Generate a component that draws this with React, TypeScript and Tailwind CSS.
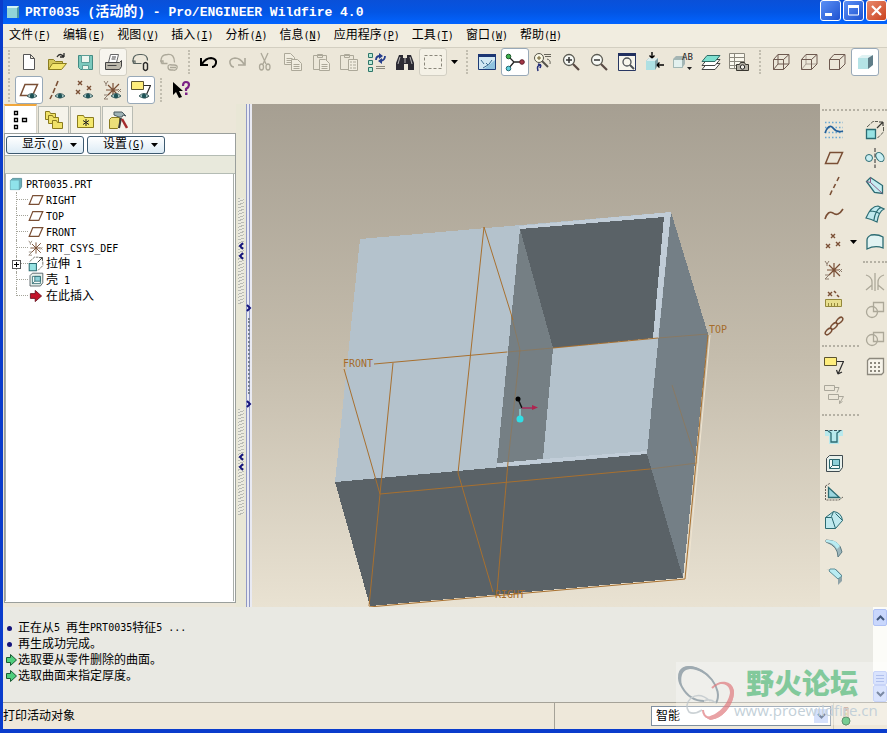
import { useState, type ReactNode } from "react";
import clsx from "clsx";

const INK = "#2b2b2b";
const BROWN = "#7a4f35";
const TEAL = "#2b6b72";
const GRAY = "#aca899";

interface Tool {
  name: string;
  icon: ReactNode;
  active?: boolean;
  raised?: boolean;
  caret?: boolean;
}

function Glyph({ children, size = 20 }: { children: ReactNode; size?: number }) {
  return (
    <svg width={size} height={size} viewBox="0 0 20 20" fill="none" strokeWidth="1" className="shrink-0" aria-hidden="true">
      {children}
    </svg>
  );
}

function Caret() {
  return (
    <svg width="7" height="4" viewBox="0 0 7 4" className="shrink-0" aria-hidden="true">
      <path d="M0 0h7L3.500 4z" fill="#000" />
    </svg>
  );
}

function Mono({ children }: { children: ReactNode }) {
  return <span className="font-['DejaVu_Sans_Mono',monospace] text-[10px]">{children}</span>;
}

// small eye in the corner of the datum display buttons
const eye = (
  <>
    <path d="M8 16q5-5 10 0q-5 4-10 0z" fill="#a9c9c9" stroke="#3f5f60" />
    <circle cx="13" cy="16" r="2.2" fill="#1f5357" />
  </>
);

const cross = (x: number, y: number, c = BROWN) => (
  <path d={`M${x - 2} ${y - 2}l4 4m0-4l-4 4`} stroke={c} strokeWidth="1.4" />
);

const csys = (
  <>
    <path d="M10 3v14M5 5l11 11M16 4L5 15M3 10h12" stroke={BROWN} strokeWidth="1.2" />
    <path d="M1 1l2 3 2-3M3 4v2M15 9l3 3m0-3l-3 3M1 15h4l-4 4h4" stroke="#8c7b6c" />
  </>
);

const plane = <path d="M6 4.500h12.500l-5 11H1.500z" stroke={BROWN} strokeWidth="1.500" />;
const note = (
  <>
    <path d="M0.500 1.500h12v8h-12z" fill="#ffee7c" stroke="#5c5430" />
    <path d="M13 5.500h6.500L14 18m0 0l-1.500-4m1.500 4l4-2" stroke={INK} strokeWidth="1.200" />
  </>
);

const page = (x: number, y: number, c: string) => (
  <>
    <path d={`M${x + 0.5} ${y + 0.5}h6l4 4v7h-10z`} stroke={c} fill="#f1ede0" />
    <path d={`M${x + 2.5} ${y + 5.5}h6m-6 2h6m-6 2h6`} stroke={c} />
  </>
);

const cube = (
  <>
    <path d="M2.500 7.500h10v10h-10z" />
    <path d="M2.500 7.500l4.500-5h11l-5.500 5M18 2.500v9.500l-5.500 5.500" />
  </>
);

const lens = (
  <>
    <circle cx="8" cy="8" r="5.500" fill="#f7f9f5" stroke="#5a5a52" strokeWidth="1.300" />
    <path d="M12 12l6 6" stroke="#5a4b45" strokeWidth="2.200" />
  </>
);

const fileTools: Tool[] = [
  { name: "新建", icon: <path d="M4.500 2.500h7l4 4v11h-11zM11.500 2.500v4h4" fill="#fff" stroke="#555" /> },
  {
    name: "打开",
    icon: (
      <>
        <path d="M1.500 17.500v-10h5l2 2h7v3" fill="#d5c75a" stroke="#8b7d20" />
        <path d="M1.500 17.500l4-6h14l-5 6z" fill="#f3e56c" stroke="#8b7d20" />
        <path d="M10 5q3-5 7 0m0 0v-4m0 4h-4" stroke={INK} strokeWidth="1.300" />
      </>
    ),
  },
  {
    name: "保存",
    icon: (
      <>
        <path d="M3.500 3.500h14v14h-12l-2-2z" fill="#7cc9bd" stroke="#438b83" />
        <path d="M6.500 3.500h8v7h-8zM7.500 13.500h6v4h-6z" fill="#eef6ef" stroke="#5c9e96" />
      </>
    ),
  },
  {
    name: "打印",
    raised: true,
    icon: (
      <>
        <path d="M7.500 2.500h8l-2 8h-8z" fill="#fff" stroke="#666" />
        <path d="M2.500 10.500h14l2-2v6l-2 3h-14z" fill="#bdb9ad" stroke="#444" />
        <path d="M4.500 13.500h9M9 5h4M8.500 7h4" stroke="#444" />
      </>
    ),
  },
  {
    name: "发送邮件",
    icon: (
      <>
        <path d="M2.500 11.500q-2-9 6-9h2q6 0 6 6M2.500 11.500h8M1 9h3v3" stroke="#55605c" strokeWidth="1.200" />
        <path d="M12.500 17v-5q2-3 4 0v5q-2 3-4 0v-3" stroke={INK} strokeWidth="1.400" />
      </>
    ),
  },
  {
    name: "发送链接",
    icon: (
      <path d="M2.500 11.500q-2-9 6-9q7-1 7 8M2.500 11.500h6M1 9h3v3M9 15q0-3 4-2h2q4 0 3 3t-4 2h-2q-3 0-3-3zM11 15.500h6" stroke={GRAY} strokeWidth="1.300" />
    ),
  },
];

const editTools: Tool[] = [
  { name: "撤消", icon: <path d="M2 6v7h7M3 12q4-6 9-6q6 1 5 5q-1 4-4 4" stroke="#000" strokeWidth="2" /> },
  { name: "重做", icon: <path d="M18 6v7h-7M17 12q-4-6-9-6q-6 1-5 5q1 4 4 4" stroke={GRAY} strokeWidth="1.600" /> },
  {
    name: "剪切",
    icon: (
      <g stroke={GRAY} strokeWidth="1.300">
        <path d="M6 1l5 11M13 1L8 12" />
        <ellipse cx="6.500" cy="15" rx="2" ry="3" />
        <ellipse cx="13" cy="15" rx="2" ry="3" />
      </g>
    ),
  },
  { name: "复制", icon: <>{page(1, 1, GRAY)}{page(8, 7, GRAY)}</> },
  {
    name: "粘贴",
    icon: (
      <>
        <path d="M2.500 3.500h13v14h-13zM6.500 5.500v-3h5v3z" stroke={GRAY} />
        {page(8, 7, GRAY)}
      </>
    ),
  },
  {
    name: "选择性粘贴",
    icon: (
      <>
        <path d="M1.500 3.500h13v14h-13zM5.500 5.500v-3h5v3z" stroke={GRAY} />
        <path d="M9.500 7.500h9v11h-9z" fill="#f1ede0" stroke={GRAY} />
        <path d="M11 10h2m1 0h3m-6 3h2m1 0h3m-6 3h2m1 0h3" stroke={GRAY} />
      </>
    ),
  },
  {
    name: "再生",
    icon: (
      <>
        <path d="M1.500 1.500h4v4h-4zM1.500 8.500h4v4h-4zM1.500 15.500h4v4h-4z" fill="#b9ead8" stroke="#2e766a" />
        <path d="M9 8q0-4 4-4M18 4q0 4-4 5" stroke="#273f8c" strokeWidth="1.800" />
        <path d="M12 1l4 3-4 3zM15 6l-4 3 4 3z" fill="#273f8c" />
        <path d="M9 14.500h9m-9 2h9" stroke="#8c897c" />
      </>
    ),
  },
  {
    name: "查找",
    icon: (
      <>
        <path d="M4 3h4v3h4V3h4l3 8v7h-6v-6h-4v6H1v-7z" fill="#2c2b33" />
        <path d="M5 5L3 12M15 5l2 7M10 6v5" stroke="#b7b5b5" />
      </>
    ),
  },
];

const viewTools: Tool[] = [
  {
    name: "重画",
    icon: (
      <>
        <path d="M1.500 2.500h17v15h-17z" fill="#d3e9f3" stroke="#1e3c77" />
        <path d="M1 2h18v3H1z" fill="#1c3673" />
        <path d="M7 17L18 8v9z" fill="#8fc3df" />
        <path d="M4 8l3 4M15 8q-2 5-9 8M9 11l2 2" stroke="#3a6d92" />
      </>
    ),
  },
  {
    name: "旋转中心",
    active: true,
    icon: (
      <>
        <path d="M4 5l5 5-5 6M9 10h8" stroke="#222" strokeWidth="1.300" />
        <circle cx="3.500" cy="4.500" r="2.300" fill="#3daf4a" stroke="#1c592a" />
        <circle cx="3.500" cy="16.500" r="2.300" fill="#60cedc" stroke="#226872" />
        <circle cx="17" cy="10" r="2.300" fill="#a43747" stroke="#611c29" />
      </>
    ),
  },
  {
    name: "定向模式",
    icon: (
      <>
        <circle cx="6" cy="6" r="4.500" fill="#faf8e5" stroke="#55544b" />
        <path d="M6 4v4M4 6h4" stroke="#6b5d2c" />
        <path d="M9 9l6 6" stroke="#57534b" strokeWidth="2" />
        <path d="M11 2.500h7m-6 2h6M14 7q4 1 3 5" stroke="#66645a" />
        <path d="M5 19q-2-6 3-6m0 0l-3-1m3 1l-1 3" stroke="#26307c" strokeWidth="1.600" />
      </>
    ),
  },
  { name: "放大", icon: <>{lens}<path d="M8 5v6M5 8h6" stroke="#333" strokeWidth="1.500" /></> },
  { name: "缩小", icon: <>{lens}<path d="M5 8h6" stroke="#333" strokeWidth="1.500" /></> },
  {
    name: "重新调整",
    icon: (
      <>
        <path d="M1.500 1.500h17v17h-17z" fill="#f8f6ec" stroke="#283763" />
        <path d="M1 1h18v3H1z" fill="#22305f" />
        <circle cx="10" cy="10" r="4" stroke="#4e5256" strokeWidth="1.300" />
        <path d="M13 13l4 4" stroke="#4e5256" strokeWidth="2" />
      </>
    ),
  },
  {
    name: "重定向",
    icon: (
      <>
        <path d="M1 9l3-3h9v7l-3 5H1z" fill="#7f9da3" />
        <path d="M1 9h9v9H1z" fill="#aee0e3" />
        <path d="M1 9l3-3h9l-3 3z" fill="#dceeee" />
        <path d="M7 0v6m0 0L4.500 3.500M7 6l2.500-2.500M19 13h-7m0 0l2.500-2.500M12 13l2.500 2.500" stroke="#000" strokeWidth="1.400" />
      </>
    ),
  },
  {
    name: "保存的视图",
    icon: (
      <>
        <path d="M0 7l3-3h9v8l-3 4H0z" fill="#a5b5b4" />
        <path d="M0.500 7.500h9v8h-9z" fill="#e3f1ef" stroke="#a3b8b5" />
        <text x="9" y="8" fontSize="9" fontFamily="DejaVu Sans Mono, monospace" fill="#222">AB</text>
        <path d="M14 15h5l-2.500 3z" fill="#222" />
      </>
    ),
  },
  {
    name: "图层",
    icon: (
      <>
        <path d="M6 11.500h13l-5 6H1z" fill="#fff" stroke="#444" />
        <path d="M6 7.500h13l-5 6H1z" fill="#fff" stroke="#444" />
        <path d="M6 3.500h13l-5 6H1z" fill="#7fe0d0" stroke="#2f6d67" />
      </>
    ),
  },
  {
    name: "视图管理器",
    icon: (
      <>
        <path d="M0.500 1.500h15v15h-15zM5.500 1.500v15M0.500 5.500h15m-15 4h15m-15 4h15" fill="#faf8ee" stroke="#8b887d" />
        <path d="M7.500 12.500h3l1-2h4l1 2h3v6h-12z" fill="#b5b1a6" stroke="#38362f" />
        <circle cx="13.500" cy="15" r="2.200" fill="#f4f2ea" stroke="#222" />
      </>
    ),
  },
];

const shadeTools: Tool[] = [
  {
    name: "线框",
    icon: <g stroke="#6e5a50">{cube}<path d="M7 2.500v9.500h11M7 12l-4.500 5.500" /></g>,
  },
  {
    name: "隐藏线",
    icon: <g stroke="#6e5a50"><path d="M7 2.500v9.500h11M7 12l-4.500 5.500" stroke="#a89d92" />{cube}</g>,
  },
  { name: "无隐藏线", icon: <g stroke="#6e5a50">{cube}</g> },
  {
    name: "着色",
    active: true,
    icon: (
      <>
        <path d="M3 6h10v11H3z" fill="#b5e3e6" />
        <path d="M3 6l4-3h11l-5 3z" fill="#dff2f3" />
        <path d="M13 6l5-3v10l-5 4z" fill="#5f7d88" />
      </>
    ),
  },
];

const datumTools: Tool[] = [
  { name: "平面显示", active: true, icon: <>{plane}{eye}</> },
  { name: "轴显示", icon: <><path d="M11 1l-2 5M8 8l-2 5M5 15l-2 4" stroke={BROWN} strokeWidth="1.600" />{eye}</> },
  { name: "点显示", icon: <>{cross(5, 3)}{cross(3, 12)}{cross(14, 8)}{eye}</> },
  { name: "坐标系显示", icon: <>{csys}{eye}</> },
  { name: "注释显示", active: true, icon: <>{note}{eye}</> },
];

const helpTool: Tool = {
  name: "上下文帮助",
  icon: (
    <>
      <path d="M2 2v13l3-3 3 6 3-1-3-6h4z" fill="#000" />
      <path d="M12 6q0-4 3-4t3 3q0 2-3 4v2" stroke="#7b2085" strokeWidth="2.200" />
      <path d="M14 12.500h2.500V15H14z" fill="#7b2085" />
    </>
  ),
};

const sketchTools: Tool[] = [
  {
    name: "草绘",
    icon: (
      <>
        <path d="M1 2.500h18M1 7.500h18M1 12.500h18M1 17.500h18" stroke="#6aa9d4" strokeWidth="1.500" strokeDasharray="1.500 2" />
        <path d="M1 13q4-10 8-5t10 3" stroke="#235f99" strokeWidth="1.600" />
      </>
    ),
  },
  { name: "平面", icon: plane },
  { name: "轴", icon: <path d="M15 1l-2 4M11.500 8l-2 4M8 14.500L6 19" stroke={BROWN} strokeWidth="1.600" /> },
  { name: "曲线", icon: <path d="M1 15q3-9 8-6q5 4 10-4" stroke={BROWN} strokeWidth="1.600" /> },
  { name: "点", caret: true, icon: <>{cross(9, 4)}{cross(4, 14)}{cross(14, 12)}</> },
  { name: "坐标系", icon: csys },
  {
    name: "偏移坐标系",
    icon: (
      <>
        <path d="M1.500 11.500h16v7h-16z" fill="#e8df8d" stroke="#94883c" />
        <path d="M4.500 15v3m3-3v3m3-3v3m3-3v3" stroke="#94883c" />
        {cross(6, 6)}
        <path d="M10 3l2 2M13 7l2 2" stroke={BROWN} strokeWidth="1.600" />
      </>
    ),
  },
  {
    name: "参照",
    icon: (
      <g stroke={BROWN} strokeWidth="1.500">
        <ellipse cx="4.500" cy="15.500" rx="4" ry="2.200" transform="rotate(-45 4.500 15.500)" />
        <ellipse cx="10" cy="10" rx="4" ry="2.200" transform="rotate(-45 10 10)" />
        <ellipse cx="15.500" cy="4.500" rx="4" ry="2.200" transform="rotate(-45 15.500 4.500)" />
      </g>
    ),
  },
];

const noteTools: Tool[] = [
  { name: "注释", icon: note },
  {
    name: "传播注释",
    icon: (
      <path d="M0.500 1.500h10v5h-10zM4.500 10.500h10v5h-10zM11 3.500h4l-2 5M15 12.500h4.500l-4 7m0 0v-3m0 3l3-2" stroke="#aaa79b" />
    ),
  },
];

const shellIcon = (
  <>
    <path d="M2.500 4.500l3-3h13v12l-3 4h-13z" stroke="#3f4b50" fill="#e9f1ec" />
    <path d="M5.500 5.500h10v9h-10z" fill="#f4faf7" stroke="#2a666d" />
    <path d="M8.500 5.500h7v6h-7z" fill="#8ed0d8" stroke="#2a666d" />
    <path d="M8.500 11.500l-3 3" stroke="#2a666d" />
  </>
);

const featureTools: Tool[] = [
  {
    name: "孔",
    icon: (
      <>
        <path d="M1 4h18v6h-4v8H5v-8H1z" fill="#b8e9ed" />
        <path d="M1 4.500h18" stroke="#3a4f58" strokeDasharray="3 1.500" />
        <path d="M4 5l3 2v9h6V7l3-2" stroke={TEAL} strokeWidth="1.300" />
      </>
    ),
  },
  { name: "壳", icon: shellIcon },
  {
    name: "筋",
    icon: (
      <>
        <path d="M4.500 5.500v10h11z" fill="#9bd6df" stroke={TEAL} strokeWidth="1.300" />
        <path d="M1.500 4v14H15M1.500 4l5-3M15 18l4-3" stroke="#66615a" strokeDasharray="2 1" />
      </>
    ),
  },
  {
    name: "拔模",
    icon: (
      <>
        <path d="M1.500 7.500l8-6q8 1 9 9l-7 8h-10z" fill="#bfe9ee" stroke={TEAL} />
        <path d="M9.500 1.500l-2 5 4 12M1.500 7.500h6M18.500 10.500l-7-7" stroke={TEAL} />
      </>
    ),
  },
  {
    name: "倒圆角",
    icon: (
      <>
        <path d="M2 2q14 0 16 12l-4 5Q14 8 2 4z" fill="#9cb7bd" stroke="#5f7d84" />
        <path d="M2 2q10-1 14 6l-3 3Q9 4 2 4z" fill="#b9ecf2" />
      </>
    ),
  },
  {
    name: "倒角",
    icon: (
      <>
        <path d="M2 4h3l9 9v6l4-4V9l-6-6z" fill="#8fa3a8" />
        <path d="M6 3h5l7 7-4 3-9-8z" fill="#b9ecf2" stroke="#5f8f98" />
      </>
    ),
  },
];

const extrudeIcon = (
  <>
    <path d="M1.500 9.500h9v9h-9z" fill="#97e3e3" stroke={TEAL} strokeWidth="1.300" />
    <path d="M2 7l6-5.500h5M18.500 7v5l-6 6" stroke="#5a5a50" strokeDasharray="4 1" />
    <path d="M12 8l6-6m0 0h-4m4 0v4" stroke="#3a3a34" strokeWidth="1.200" />
  </>
);

const shapeTools: Tool[] = [
  { name: "拉伸", icon: extrudeIcon },
  {
    name: "旋转",
    icon: (
      <>
        <circle cx="4" cy="10" r="3.500" fill="#c9eef2" stroke={TEAL} />
        <ellipse cx="15" cy="9" rx="3.500" ry="5" fill="#c9eef2" stroke={TEAL} transform="rotate(-35 15 9)" />
        <path d="M10 0v20" stroke={INK} strokeDasharray="4 1.500" />
      </>
    ),
  },
  {
    name: "可变截面扫描",
    icon: (
      <>
        <path d="M1.500 5.500l4-4 12 8v8l-8-1z" fill="#c5edf1" stroke={TEAL} strokeWidth="1.300" />
        <path d="M5.500 1.500v5l12 11M1.500 5.500l4 1" stroke="#8c5f83" />
      </>
    ),
  },
  {
    name: "边界混合",
    icon: <path d="M1 14q5-12 12-12l6 3q-5 2-7 13-6-3-11-4zM5 7q6 0 10 3M9 16q1-9 7-13" fill="#bfe9ee" stroke={TEAL} strokeWidth="1.200" />,
  },
  { name: "造型", icon: <path d="M2 8q0-3 4-5 7-1 12 2v11q-8-3-16 1z" fill="#e1f3f2" stroke={TEAL} strokeWidth="1.300" /> },
];

const modifyTools: Tool[] = [
  { name: "镜像", icon: <path d="M10 1v18M1 3q6 2 6 7v8M1 18l6-5M19 3q-6 2-6 7v8M19 18l-6-5" stroke={GRAY} strokeWidth="1.300" /> },
  { name: "合并", icon: <><circle cx="7" cy="12" r="5.500" stroke={GRAY} strokeWidth="1.300" /><path d="M8.500 2.500h10v9h-10z" stroke={GRAY} strokeWidth="1.300" /></> },
  { name: "修剪", icon: <><circle cx="7" cy="12" r="5.500" stroke={GRAY} strokeWidth="1.300" /><path d="M8.500 4.500h10v9h-10z" stroke={GRAY} strokeWidth="1.300" /></> },
  {
    name: "阵列",
    icon: (
      <>
        <path d="M2.500 4.500l2-2h14v14l-2 2h-14z" fill="#f6f3e9" stroke="#8c887d" strokeWidth="1.300" />
        <path d="M5 7h10M5 11h10M5 15h10" stroke="#8c887d" strokeWidth="2" strokeDasharray="2 2" />
      </>
    ),
  },
];

const menus = [
  ["文件", "F"], ["编辑", "E"], ["视图", "V"], ["插入", "I"], ["分析", "A"],
  ["信息", "N"], ["应用程序", "P"], ["工具", "T"], ["窗口", "W"], ["帮助", "H"],
];

const arrow = (
  <path d="M3 7h6V3l8 7-8 7v-4H3z" fill="#c3142a" stroke="#5f0914" />
);

const treeItems: { icon: ReactNode; label: ReactNode; expandable?: boolean }[] = [
  { icon: plane, label: <Mono>RIGHT</Mono> },
  { icon: plane, label: <Mono>TOP</Mono> },
  { icon: plane, label: <Mono>FRONT</Mono> },
  { icon: csys, label: <Mono>PRT_CSYS_DEF</Mono> },
  { icon: extrudeIcon, label: <>拉伸<Mono> 1</Mono></>, expandable: true },
  { icon: shellIcon, label: <>壳<Mono> 1</Mono></> },
  { icon: arrow, label: "在此插入" },
];

const folder = (x: number, y: number) => (
  <path d={`M${x} ${y + 8}v-8h4l1 2h5v6z`} fill="#f0e268" stroke="#8a7b1e" />
);

const tabs: { name: string; icon: ReactNode }[] = [
  {
    name: "模型树",
    icon: <path d="M3.500 1.500h3v3h-3zM3.500 8.500h3v3h-3zM3.500 15.500h3v3h-3zM11.500 8.500h4v3h-4z" stroke="#000" strokeWidth="1.300" />,
  },
  { name: "文件夹浏览器", icon: <>{folder(1.5, 1.5)}{folder(4.5, 5.5)}{folder(8.5, 10.5)}</> },
  {
    name: "收藏夹",
    icon: (
      <>
        <path d="M1.500 17.500v-12h6l1 2h9v10z" fill="#f4e86c" stroke="#8a7b1e" />
        <path d="M10 9v7M7 10.500l6 4M13 10.500l-6 4" stroke="#222" />
      </>
    ),
  },
  {
    name: "连接",
    icon: (
      <>
        <path d="M1.500 18.500v-9l2-2h8v9l-2 2z" fill="#ecdf79" stroke="#8a7b1e" />
        <path d="M6 2h8l4 4-3-1-1 2h-3L6 5z" fill="#9fb3b5" stroke="#4b5b60" />
        <path d="M13 8l-2 10" stroke="#3b3b3b" strokeWidth="2" />
        <path d="M14 9l5 9" stroke="#a32b2b" strokeWidth="2.500" />
      </>
    ),
  },
];

function ToolButton({ tool }: { tool: Tool }) {
  return (
    <button
      type="button"
      aria-label={tool.name}
      title={tool.name}
      className={clsx(
        "flex size-7 shrink-0 items-center justify-center rounded-[3px] border",
        tool.active && "border-[#98a9b8] bg-white",
        tool.raised && "border-[#d2cfc3] bg-[#f7f5ee]",
        !tool.active && !tool.raised && "border-transparent hover:bg-white/60"
      )}
    >
      <Glyph>{tool.icon}</Glyph>
    </button>
  );
}

function Grip({ wide }: { wide?: boolean }) {
  return (
    <div className={clsx("flex h-7 shrink-0 justify-center py-0.5", wide ? "w-3.5" : "w-3")}>
      <span className="border-l-2 border-dotted border-[#c2beb0]" />
    </div>
  );
}

function ToolRow({ tools }: { tools: Tool[] }) {
  return (
    <div className="flex">
      {tools.map((t) => (
        <ToolButton key={t.name} tool={t} />
      ))}
    </div>
  );
}

function ToolColumn({ groups }: { groups: Tool[][] }) {
  return (
    <>
      {groups.map((tools, i) => (
        <div key={i}>
          <div className={clsx("flex flex-col justify-center px-0.5", i < 2 ? "h-3" : "h-3.5")}>
            <span className="border-t-2 border-dotted border-[#b5b1a4]" />
          </div>
          {tools.map((t) => (
            <div key={t.name} className="flex items-center gap-0.5">
              <ToolButton tool={t} />
              {t.caret && <Caret />}
            </div>
          ))}
        </div>
      ))}
    </>
  );
}

function TitleBar() {
  return (
    <header className="flex h-6 shrink-0 items-center bg-linear-to-b from-[#0a50d8] via-[#0355e4] to-[#0264ff] text-white">
      <span className="ml-1 size-3 border-t-2 border-r-2 border-t-[#d2f3f3] border-r-[#4b98a2] bg-[#8fd4d8]" />
      <h1 className="ml-1.5 flex-1 font-['Liberation_Mono','Noto_Sans_CJK_SC',monospace] text-[13px] leading-5 font-bold whitespace-pre">
        PRT0035 (<span className="text-sm leading-5">活动的</span>) - Pro/ENGINEER Wildfire 4.0
      </h1>
      <div className="flex gap-0.5 self-start">
        <button type="button" aria-label="最小化" className="size-[21px] rounded-[3px] border border-white bg-linear-to-br from-[#5b8ff5] to-[#1f52d0]">
          <svg viewBox="0 0 19 19" aria-hidden="true"><path d="M4 12h7v3H4z" fill="#fff" /></svg>
        </button>
        <button type="button" aria-label="最大化" className="size-[21px] rounded-[3px] border border-white bg-linear-to-br from-[#5b8ff5] to-[#1f52d0]">
          <svg viewBox="0 0 19 19" fill="none" aria-hidden="true"><path d="M4.500 5h10v9h-10z" stroke="#fff" /><path d="M4 4h11v3H4z" fill="#fff" /></svg>
        </button>
        <button type="button" aria-label="关闭" className="size-[21px] rounded-[3px] border border-white bg-linear-to-br from-[#e8896c] to-[#c9401a]">
          <svg viewBox="0 0 19 19" aria-hidden="true"><path d="M5 5l9 9m0-9l-9 9" stroke="#fff" strokeWidth="2.200" /></svg>
        </button>
      </div>
    </header>
  );
}

function ModelTree() {
  const [tab, setTab] = useState("模型树");

  return (
    <aside className="flex w-[233px] shrink-0 flex-col pb-1 pl-px">
      <div className="flex h-[29px] items-end gap-px">
        {tabs.map((t) => (
          <button
            key={t.name}
            type="button"
            aria-label={t.name}
            onClick={() => setTab(t.name)}
            className={clsx(
              "flex items-center justify-center border-x border-t",
              t.name === tab
                ? "h-[29px] w-[33px] border-x-[#d5d2c8] border-t-2 border-t-[#f0a63c] bg-white"
                : "h-[27px] w-[31px] border-[#b9bcb4] bg-[#f5f3ea]"
            )}
          >
            <Glyph>{t.icon}</Glyph>
          </button>
        ))}
      </div>
      <div className="flex flex-1 flex-col border border-[#9a9f9c] bg-white pb-px">
        <div className="flex h-[21px] items-center gap-[3px] px-px">
          {[["显示", "O"], ["设置", "G"]].map(([label, key]) => (
            <button
              key={key}
              type="button"
              className="flex h-[18px] w-[78px] items-center justify-end gap-1.5 rounded-[3px] border border-[#3d5a70] bg-linear-to-b from-white to-[#dcebf5] pr-1.5 leading-4"
            >
              <span>{label}<Mono>(<u>{key}</u>)</Mono></span>
              <Caret />
            </button>
          ))}
        </div>
        <div className="h-[19px] border-y border-[#b4bcb4] bg-[#e8e9dc]" />
        <div className="mr-px flex-1 border-x border-[#a9aeaa] pt-0.5">
          <div className="flex h-4 items-center pl-[3px]">
            <Glyph size={14}>
              <path d="M2 5l3-3h13v12l-3 4H2z" fill="#6aaeb8" stroke="#3c7d88" />
              <path d="M2 5h12v13H2z" fill="#8fe3ea" />
            </Glyph>
            <span className="pl-[3px]"><Mono>PRT0035.PRT</Mono></span>
          </div>
          <ul>
            {treeItems.map((item, i) => (
              <li key={i} className="relative flex h-4 items-center pl-2.5 leading-4">
                <span
                  className={clsx(
                    "w-3 shrink-0 border-l border-dotted border-[#a5a59b]",
                    i === treeItems.length - 1 ? "h-2 self-start" : "h-4"
                  )}
                >
                  <span className="block h-2 border-b border-dotted border-[#a5a59b]" />
                </span>
                {item.expandable && (
                  <button type="button" aria-label="展开" className="absolute top-1 left-1.5 size-[9px] border border-[#555] bg-white">
                    <svg viewBox="0 0 7 7" aria-hidden="true"><path d="M1 3.500h5M3.500 1v5" stroke="#000" /></svg>
                  </button>
                )}
                <Glyph size={16}>{item.icon}</Glyph>
                <span className="pl-0.5 whitespace-pre">{item.label}</span>
              </li>
            ))}
          </ul>
        </div>
      </div>
    </aside>
  );
}

function Chevrons({ d }: { d: string }) {
  return (
    <svg width="6" height="20" viewBox="0 0 6 20" fill="none" aria-hidden="true" className="shrink-0">
      <path d={d} stroke="#14147c" strokeWidth="2" />
    </svg>
  );
}

const twoLeft = "M5 2L2 5l3 3M5 12l-3 3 3 3";
const hatch = "flex h-[106px] w-1.5 items-center bg-[repeating-linear-gradient(160deg,#b9bbb4_0px,#b9bbb4_1px,#ecebe0_1px,#ecebe0_3px)]";

function Splitters() {
  return (
    <>
      <div className="flex w-2.5 shrink-0 flex-col items-center gap-[105px] bg-[#e9e7d6] pt-[94px]">
        <div className={hatch}><Chevrons d={twoLeft} /></div>
        <div className={hatch}><Chevrons d={twoLeft} /></div>
      </div>
      <div className="flex w-1.5 shrink-0 flex-col bg-[repeating-linear-gradient(90deg,#9098c4_0px,#9098c4_1px,#e9eaf2_1px,#e9eaf2_3px)] pt-[194px]">
        <Chevrons d="M1 7l3 3-3 3" />
        <span className="ml-0.5 h-[76px] border-l-2 border-dotted border-[#77808f]" />
        <Chevrons d="M1 7l3 3-3 3" />
      </div>
    </>
  );
}

function ModelView() {
  return (
    <svg
      viewBox="252 104 568 503"
      className="min-w-0 flex-1 bg-linear-to-b from-[#a69f92] via-[#c4bcac] to-[#e9e2d2]"
      role="img"
      aria-label="PRT0035"
    >
      <g shapeRendering="crispEdges">
        <path d="M360 239L671 212L647 454L335 482z" fill="#b4c2cc" />
        <path d="M671 212L708 334L683 578L647 454z" fill="#747f86" />
        <path d="M335 482L647 454L683 578L370 606z" fill="#5a6267" />
        <path d="M520 229L664 217L653 338L553 348z" fill="#5a6267" />
        <path d="M520 229L553 348L543 459L497 463z" fill="#757f84" />
        <path d="M520 229L664 217L653 338H658L671 212L519 226z" fill="#c1cdd8" />
        <path d="M497 463L543 459L647 451V454L497 467z" fill="#c1cdd8" />
      </g>
      <g fill="none" stroke="#a8702f">
        <path d="M374 364L507 352M393 363L380 494L369 606M344 369L380 494L650 469" />
        <path d="M484 227L458 473L493 592M484 227L513 320M508 462L497 592M553 348L658 338" />
        <path d="M708 335L685 579L369 607" />
        <path d="M507 352L553 348M658 338L708 334M512 318L520 350L508 462M650 469L697 463M672 385L697 463" opacity="0.400" />
      </g>
      <path d="M710 335L687 580" stroke="#efe4d0" fill="none" />
      <g fill="#a56c2b" fontSize="10" fontFamily="DejaVu Sans Mono, monospace">
        <text x="343" y="367">FRONT</text>
        <text x="709" y="333">TOP</text>
        <text x="495" y="598">RIGHT</text>
      </g>
      <path d="M518 399L522 408" stroke="#111" strokeWidth="1.500" />
      <path d="M522 408H535" stroke="#a82a5c" strokeWidth="1.500" />
      <path d="M520 409V418" stroke="#9ff" />
      <circle cx="518" cy="399" r="2.500" />
      <path d="M532 405l6 2.500-6 2.500z" fill="#b0244f" />
      <circle cx="520" cy="419" r="3.500" fill="#2fdfe6" />
    </svg>
  );
}

function Messages() {
  const dot = <span className="mr-1 size-[5px] rounded-full bg-[#14147c]" />;
  const go = (
    <svg width="13" height="14" viewBox="0 0 13 14" aria-hidden="true">
      <path d="M1.500 4.500h4v-3l6 5.500-6 5.500v-3h-4z" fill="#4fce7c" stroke="#1a5c34" />
    </svg>
  );
  const lines = [
    { mark: dot, text: <>正在从<Mono>5 </Mono>再生<Mono>PRT0035</Mono>特征<Mono>5 ...</Mono></> },
    { mark: dot, text: "再生成功完成。" },
    { mark: go, text: "选取要从零件删除的曲面。" },
    { mark: go, text: "选取曲面来指定厚度。" },
  ];

  return (
    <section className="flex h-24 shrink-0 border-b border-[#a5a298] bg-[#e9e9e3]">
      <ul className="flex-1 pt-[13px] pl-0.5">
        {lines.map((line, i) => (
          <li key={i} className="flex h-4 items-center leading-4 whitespace-pre">
            <span className="flex w-[13px] justify-center">{line.mark}</span>
            {line.text}
          </li>
        ))}
      </ul>
      <div className="flex w-3.5 flex-col bg-[#fcfcf8] pt-0.5">
        <button type="button" aria-label="向上滚动" className="flex h-[17px] items-center justify-center rounded-[2px] border border-[#b0c2f5] bg-[#c9d7fc]">
          <svg width="9" height="6" viewBox="0 0 9 6" fill="none"><path d="M1 5l3.500-3.500L8 5" stroke="#42587c" strokeWidth="2" /></svg>
        </button>
        <div className="flex-1" />
        <div className="flex h-3.5 flex-col justify-center gap-0.5 rounded-[2px] border border-[#b0c2f5] bg-[#c9d7fc] px-0.5">
          <span className="h-px bg-[#8ea5e6]" />
          <span className="h-px bg-[#8ea5e6]" />
          <span className="h-px bg-[#8ea5e6]" />
        </div>
        <button type="button" aria-label="向下滚动" className="flex h-[17px] items-center justify-center rounded-[2px] border border-[#b0c2f5] bg-[#c9d7fc]">
          <svg width="9" height="6" viewBox="0 0 9 6" fill="none"><path d="M1 1l3.500 3.500L8 1" stroke="#42587c" strokeWidth="2" /></svg>
        </button>
      </div>
    </section>
  );
}

function StatusBar() {
  return (
    <footer className="flex h-[26px] shrink-0 items-center bg-[#eee8da]">
      <p className="flex-1">打印活动对象</p>
      <span className="h-full w-[97px] border-l border-[#a5a298]" />
      <div className="relative w-[180px]">
        <label htmlFor="filter" className="sr-only">过滤器</label>
        <select id="filter" className="block h-5 w-full appearance-none border border-[#7f8f9f] bg-white px-1 leading-[18px] outline-none">
          <option>智能</option>
          <option>特征</option>
          <option>几何</option>
        </select>
        <span className="pointer-events-none absolute top-[3px] right-[3px] flex size-3.5 items-center justify-center bg-[#c5d5fa]">
          <svg width="9" height="6" viewBox="0 0 9 6" fill="none"><path d="M1 1l3.500 3.500L8 1" stroke="#42587c" strokeWidth="2" /></svg>
        </span>
      </div>
      <span className="ml-0.5 flex h-full w-[54px] items-center border-l border-[#cfcabb] pl-1.5">
        <svg width="12" height="20" viewBox="0 0 12 20" aria-hidden="true">
          <path d="M4 1.500h4v10H4z" fill="#efe3d2" stroke="#c09a88" />
          <circle cx="6" cy="3.500" r="1.500" fill="#d89a86" />
          <circle cx="6" cy="8" r="1.500" fill="#dccb94" />
          <circle cx="6" cy="15" r="4" fill="#3db865" stroke="#1d6332" />
        </svg>
      </span>
    </footer>
  );
}

function Watermark() {
  return (
    <div className="pointer-events-none absolute right-0 bottom-1 flex h-[63px] w-[211px] bg-white/30">
      <svg width="60" height="63" viewBox="0 0 60 63" fill="none" className="shrink-0" aria-hidden="true">
        <g opacity="0.800">
          <path d="M40 41C48 27 30 5 13 5C2 6 1 17 6 25C11 34 19 39 28 39" stroke="#8b9aa3" strokeWidth="2" />
          <path d="M6 25C-2 12 4 3 14 4C24 5 33 12 38 20C30 12 22 7 14 7C6 8 4 14 6 25z" fill="#8b9aa3" />
          <path d="M28 39Q34 36 40 41M34 39Q24 30 15 36Q8 43 13 50Q18 53 26 48" stroke="#c0c8cc" strokeWidth="1.500" />
        </g>
        <g opacity="0.700">
          <path d="M36 26C44 18 55 19 57 29C57 44 44 58 33 56Q27 54 27 48" stroke="#e07b7f" strokeWidth="2" />
          <path d="M41 22C50 18 58 22 58 31C57 44 46 57 34 58L29 55C42 54 52 42 54 31C54 24 49 21 41 22z" fill="#e07b7f" />
        </g>
      </svg>
      <div className="-ml-0.5 flex flex-col pt-0.5">
        <span className="pl-3 font-['Noto_Sans_CJK_SC',sans-serif] text-[28px] leading-9 font-black text-[#82c99b]">野火论坛</span>
        <span className="font-['Open_Sans',sans-serif] text-[15px] leading-5 text-[#c3d0d8]">www.proewildfire.cn</span>
      </div>
    </div>
  );
}

export default function App() {
  return (
    <div className="relative flex min-h-screen flex-col overflow-hidden border-b-4 border-l-[3px] border-[#0a3ccc] bg-[#ece7d9] font-['Liberation_Sans','Noto_Sans_CJK_SC',sans-serif] text-xs text-black">
      <TitleBar />
      <nav className="flex h-6 shrink-0 items-center gap-3 border-b border-[#d3cfc1] bg-[#f1ede0] pl-1.5">
        {menus.map(([label, key]) => (
          <button key={key} type="button" className="leading-5 whitespace-nowrap">
            {label}<Mono>(<u>{key}</u>)</Mono>
          </button>
        ))}
      </nav>
      <div className="shrink-0">
        <div className="flex">
          <Grip />
          <ToolRow tools={fileTools} />
          <Grip />
          <ToolRow tools={editTools} />
          <button type="button" aria-label="选择框" className="flex size-7 shrink-0 items-center justify-center rounded-[3px] border border-[#d2cfc3] bg-[#f4f1e6]">
            <Glyph><path d="M1.500 3.500h17v13h-17z" stroke="#8a877b" strokeDasharray="3 2" /></Glyph>
          </button>
          <button type="button" aria-label="选择选项" className="flex w-3.5 items-center justify-center"><Caret /></button>
          <Grip />
          <ToolRow tools={viewTools} />
          <Grip wide />
          <ToolRow tools={shadeTools} />
        </div>
        <div className="flex">
          <Grip />
          <ToolRow tools={datumTools} />
          <Grip />
          <ToolButton tool={helpTool} />
        </div>
      </div>
      <main className="flex flex-1">
        <ModelTree />
        <Splitters />
        <ModelView />
        <div className="flex w-[67px] shrink-0 overflow-hidden">
          <div className="w-[41px] shrink-0">
            <ToolColumn groups={[sketchTools, noteTools, featureTools]} />
          </div>
          <div className="flex-1">
            <ToolColumn groups={[shapeTools, modifyTools]} />
          </div>
        </div>
      </main>
      <Messages />
      <StatusBar />
      <Watermark />
    </div>
  );
}
